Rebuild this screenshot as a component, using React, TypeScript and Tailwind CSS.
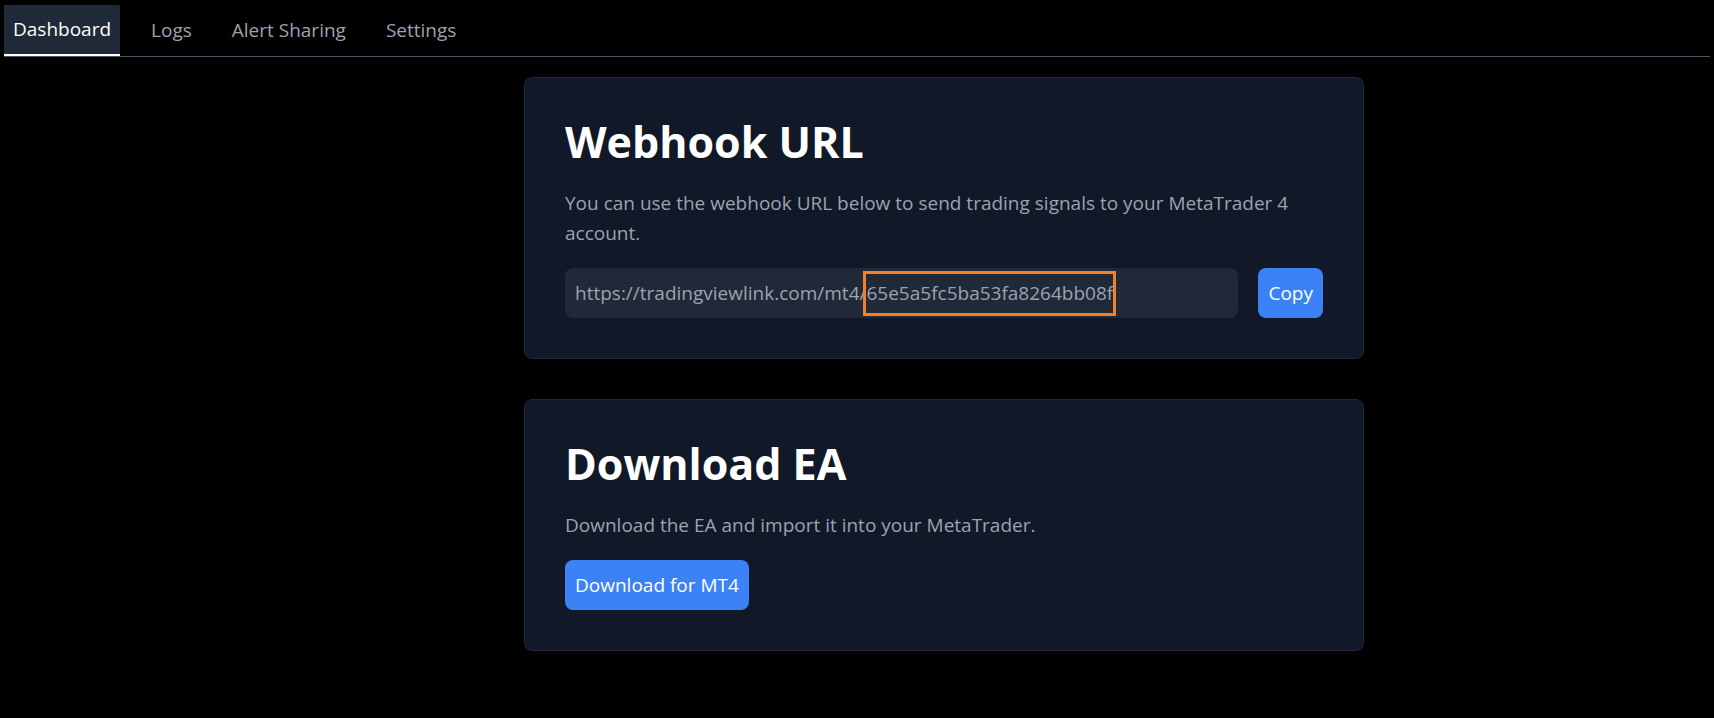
import React from "react";

const tabs = ["Dashboard", "Logs", "Alert Sharing", "Settings"];

const Card: React.FC<{ title: string; children: React.ReactNode }> = ({ title, children }) => (
  <div className="rounded-lg border border-[#1f2937] bg-[#111827] p-10">
    <h2 className="mb-[22px] text-[43px] font-bold leading-[48px] text-white">{title}</h2>
    {children}
  </div>
);

export default function App() {
  return (
    <div className="min-h-screen bg-black font-['Open_Sans',sans-serif] text-white">
      {/* Nav */}
      <div className="px-1 pt-[5px]">
        <div className="flex gap-[22px] border-b border-[#4b5563]">
          {tabs.map((t, i) => (
            <button
              key={t}
              className={
                i === 0
                  ? "h-[51px] border-b-2 border-white bg-[#1f2937] px-[9px] text-[19px] text-white"
                  : "h-[51px] px-[9px] text-[19px] text-[#9ca3af]"
              }
            >
              {t}
            </button>
          ))}
        </div>
      </div>

      <div className="ml-[524px] mt-5 flex w-[840px] flex-col gap-10">
        <Card title="Webhook URL">
          <p className="mb-5 max-w-[735px] text-[19px] leading-[30px] text-[#9ca3af]">
            You can use the webhook URL below to send trading signals to your MetaTrader 4 account.
          </p>
          <div className="flex items-center gap-5">
            <div className="flex h-[50px] flex-1 items-center rounded-lg bg-[#1f2937] px-[10px] text-[19px] text-[#9ca3af]">
              https://tradingviewlink.com/mt4/
              <span className="-ml-[3px] inline-block border-[3px] border-[#f58025] leading-[39px]">
                65e5a5fc5ba53fa8264bb08f
              </span>
            </div>
            <button className="h-[50px] rounded-lg bg-[#3b82f6] px-[10px] text-[19px] text-white">Copy</button>
          </div>
        </Card>

        <Card title="Download EA">
          <p className="mb-5 text-[19px] leading-[30px] text-[#9ca3af]">
            Download the EA and import it into your MetaTrader.
          </p>
          <button className="h-[50px] rounded-lg bg-[#3b82f6] px-[10px] text-[19px] text-white">
            Download for MT4
          </button>
        </Card>
      </div>
    </div>
  );
}
